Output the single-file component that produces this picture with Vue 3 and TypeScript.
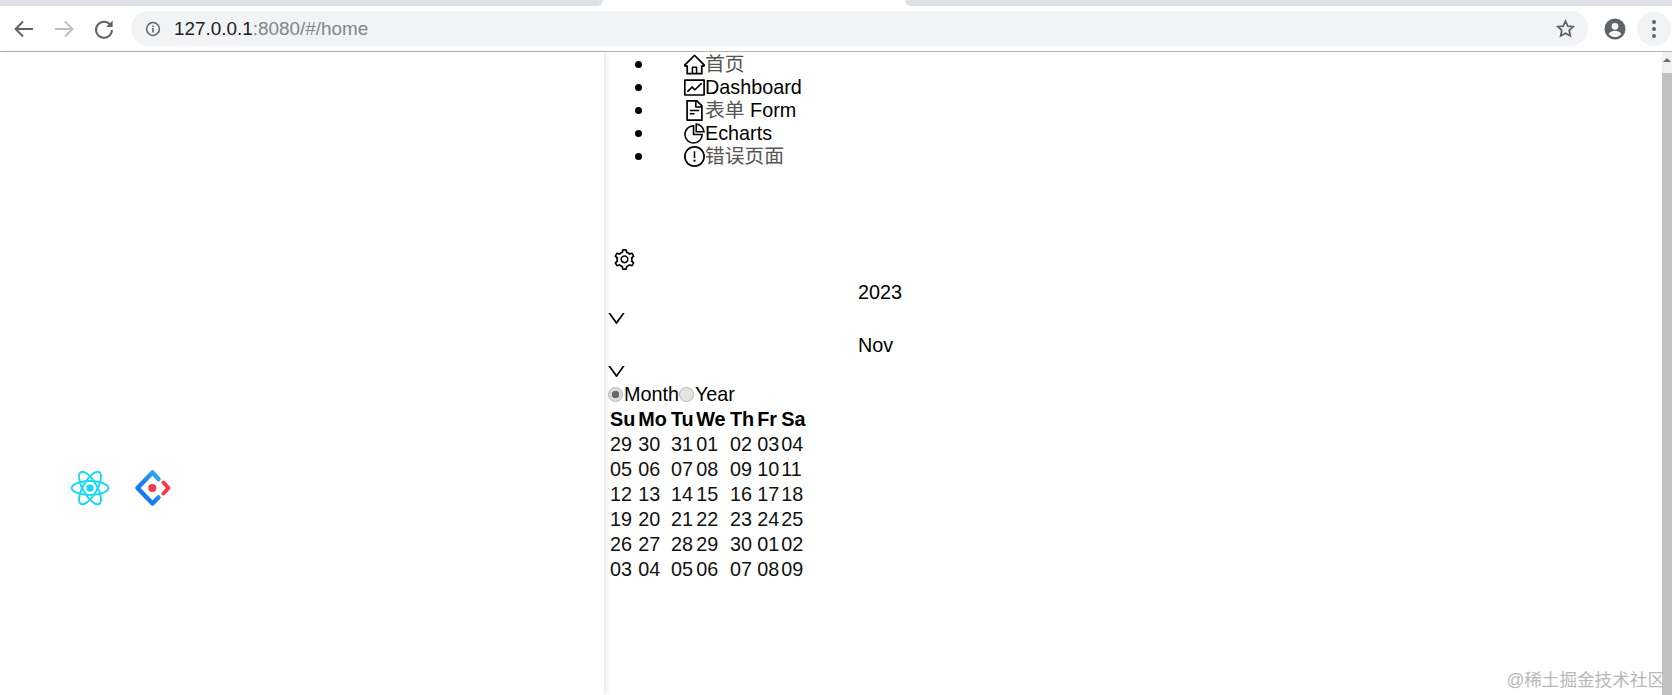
<script setup lang="ts">
const menu = [
  { cjk: '首页', text: '', d: ['M946.5 505L560.1 118.8l-25.9-25.9a31.5 31.5 0 0 0-44.4 0L77.5 505a63.9 63.9 0 0 0-18.8 46c.4 35.2 29.7 63.3 64.9 63.3h42.5V940h691.8V614.3h43.4c17.1 0 33.2-6.7 45.3-18.8a63.6 63.6 0 0 0 18.7-45.3c0-17-6.7-33.1-18.8-45.2zM568 868H456V664h112v204zm217.9-325.7V868H632V640c0-22.1-17.9-40-40-40H432c-22.1 0-40 17.9-40 40v228H238.1V542.3h-96l370-369.7 23.1 23.1L882 542.3h-96.1z'] },
  { cjk: '', text: 'Dashboard', d: ['M926 164H94c-17.7 0-32 14.3-32 32v640c0 17.7 14.3 32 32 32h832c17.7 0 32-14.3 32-32V196c0-17.7-14.3-32-32-32zm-40 632H134V236h752v560zm-658.9-82.3c3.1 3.1 8.2 3.1 11.3 0l172.5-172.5 114.4 114.5c3.1 3.1 8.2 3.1 11.3 0l297-297.2c3.1-3.1 3.1-8.2 0-11.3l-36.8-36.8a8.03 8.03 0 0 0-11.3 0L531 565 416.6 450.5a8.03 8.03 0 0 0-11.3 0l-214.9 215a8.03 8.03 0 0 0 0 11.3l36.7 36.9z'] },
  { cjk: '表单', text: ' Form', d: ['M854.6 288.6L639.4 73.4c-6-6-14.1-9.4-22.6-9.4H192c-17.7 0-32 14.3-32 32v832c0 17.7 14.3 32 32 32h640c17.7 0 32-14.3 32-32V311.3c0-8.5-3.4-16.7-9.4-22.7zM790.2 326H602V137.8L790.2 326zm1.8 562H232V136h302v216a42 42 0 0 0 42 42h216v494zM504 618H320c-4.4 0-8 3.6-8 8v48c0 4.4 3.6 8 8 8h184c4.4 0 8-3.6 8-8v-48c0-4.4-3.6-8-8-8zM312 490v48c0 4.4 3.6 8 8 8h384c4.4 0 8-3.6 8-8v-48c0-4.4-3.6-8-8-8H320c-4.4 0-8 3.6-8 8z'] },
  { cjk: '', text: 'Echarts', d: ['M864 518H506V160c0-4.4-3.6-8-8-8h-26a398.46 398.46 0 0 0-282.8 117.1 398.19 398.19 0 0 0-85.7 127.1A397.61 397.61 0 0 0 72 552a398.46 398.46 0 0 0 117.1 282.8c36.7 36.7 79.5 65.6 127.1 85.7A397.61 397.61 0 0 0 472 952a398.46 398.46 0 0 0 282.8-117.1c36.7-36.7 65.6-79.5 85.7-127.1A397.61 397.61 0 0 0 872 552v-26c0-4.4-3.6-8-8-8zM705.7 787.8A331.59 331.59 0 0 1 470.4 884c-88.1-.4-170.9-34.9-233.2-97.2C174.5 724.1 140 640.7 140 552c0-88.7 34.5-172.1 97.2-234.8 54.6-54.6 124.9-87.9 200.8-95.5V586h364.3c-7.7 76.3-41.3 147-96.6 201.8zM952 462.4l-2.6-28.2c-8.5-92.1-49.4-179-115.2-244.6A399.4 399.4 0 0 0 589 74.6L560.7 72c-4.7-.4-8.7 3.2-8.7 7.9V464c0 4.4 3.6 8 8 8l384-1c4.7 0 8.4-4 8-8.6zm-332.2-58.2V147.6a332.24 332.24 0 0 1 166.4 89.8c45.7 45.6 77 103.6 90 166.1l-256.4.7z'] },
  { cjk: '错误页面', text: '', d: ['M512 64C264.6 64 64 264.6 64 512s200.6 448 448 448 448-200.6 448-448S759.4 64 512 64zm0 820c-205.4 0-372-166.6-372-372s166.6-372 372-372 372 166.6 372 372-166.6 372-372 372z', 'M464 688a48 48 0 1 0 96 0 48 48 0 1 0-96 0zm24-112h48c4.4 0 8-3.6 8-8V296c0-4.4-3.6-8-8-8h-48c-4.4 0-8 3.6-8 8v272c0 4.4 3.6 8 8 8z'] },
]
const gear = 'M924.8 625.7l-65.5-56c3.1-19 4.7-38.4 4.7-57.8s-1.6-38.8-4.7-57.8l65.5-56a32.03 32.03 0 0 0 9.3-35.2l-.9-2.6a443.74 443.74 0 0 0-79.7-137.9l-1.8-2.1a32.12 32.12 0 0 0-35.1-9.5l-81.3 28.9c-30-24.6-63.5-44-99.7-57.6l-15.7-85a32.05 32.05 0 0 0-25.8-25.7l-2.7-.5c-52.1-9.4-106.9-9.4-159 0l-2.7.5a32.05 32.05 0 0 0-25.8 25.7l-15.8 85.4a351.86 351.86 0 0 0-99 57.4l-81.9-29.1a32 32 0 0 0-35.1 9.5l-1.8 2.1a446.02 446.02 0 0 0-79.7 137.9l-.9 2.6c-4.5 12.5-.8 26.5 9.3 35.2l66.3 56.6c-3.1 18.8-4.6 38-4.6 57.1 0 19.2 1.5 38.4 4.6 57.1L99 625.5a32.03 32.03 0 0 0-9.3 35.2l.9 2.6c18.1 50.4 44.9 96.9 79.7 137.9l1.8 2.1a32.12 32.12 0 0 0 35.1 9.5l81.9-29.1c29.8 24.5 63.1 43.9 99 57.4l15.8 85.4a32.05 32.05 0 0 0 25.8 25.7l2.7.5a449.4 449.4 0 0 0 159 0l2.7-.5a32.05 32.05 0 0 0 25.8-25.7l15.7-85a350 350 0 0 0 99.7-57.6l81.3 28.9a32 32 0 0 0 35.1-9.5l1.8-2.1c34.8-41.1 61.6-87.5 79.7-137.9l.9-2.6c4.5-12.3.8-26.3-9.3-35zM788.3 465.9c2.5 15.1 3.8 30.6 3.8 46.1s-1.3 31-3.8 46.1l-6.6 40.1 74.7 63.9a370.03 370.03 0 0 1-42.6 73.6L721 702.8l-31.4 25.8c-23.9 19.6-50.5 35-79.3 45.8l-38.1 14.3-17.9 97a377.5 377.5 0 0 1-85 0l-17.9-97.2-37.8-14.5c-28.5-10.8-55-26.2-78.7-45.7l-31.4-25.9-93.4 33.2c-17-22.9-31.2-47.6-42.6-73.6l75.5-64.5-6.5-40c-2.4-14.9-3.7-30.3-3.7-45.5 0-15.3 1.2-30.6 3.7-45.5l6.5-40-75.5-64.5c11.3-26.1 25.6-50.7 42.6-73.6l93.4 33.2 31.4-25.9c23.7-19.5 50.2-34.9 78.7-45.7l37.9-14.3 17.9-97.2c28.1-3.2 56.8-3.2 85 0l17.9 97 38.1 14.3c28.7 10.8 55.4 26.2 79.3 45.8l31.4 25.8 92.8-32.9c17 22.9 31.2 47.6 42.6 73.6L781.8 426l6.5 39.9zM512 326c-97.2 0-176 78.8-176 176s78.8 176 176 176 176-78.8 176-176-78.8-176-176-176zm79.2 255.2A111.6 111.6 0 0 1 512 614c-29.9 0-58-11.7-79.2-32.8A111.6 111.6 0 0 1 400 502c0-29.9 11.7-58 32.8-79.2C454 401.6 482.1 390 512 390c29.9 0 58 11.6 79.2 32.8A111.6 111.6 0 0 1 624 502c0 29.9-11.7 58-32.8 79.2z'
const down = 'M884 256h-75c-5.1 0-9.9 2.5-12.9 6.6L512 654.2 227.9 262.6c-3-4.1-7.8-6.6-12.9-6.6h-75c-6.5 0-10.3 7.4-6.5 12.7l352.6 486.1c12.8 17.6 39 17.6 51.7 0l352.6-486.1c3.9-5.3.1-12.7-6.4-12.7z'
const selects = ['2023', 'Nov']
const heads = ['Su', 'Mo', 'Tu', 'We', 'Th', 'Fr', 'Sa']
const days = [
  ['29', '30', '31', '01', '02', '03', '04'],
  ['05', '06', '07', '08', '09', '10', '11'],
  ['12', '13', '14', '15', '16', '17', '18'],
  ['19', '20', '21', '22', '23', '24', '25'],
  ['26', '27', '28', '29', '30', '01', '02'],
  ['03', '04', '05', '06', '07', '08', '09'],
]
</script>

<template>
  <div class="window">
    <div class="tabs">
      <div class="tab left"></div>
      <div class="tab active"></div>
      <div class="tab right"></div>
    </div>
    <div class="toolbar">
      <svg class="nav" viewBox="0 0 24 24" fill="none" stroke="#5f6368" stroke-width="2"><path d="M21 12H4M11 4.500 3.600 12l7.400 7.500" /></svg>
      <svg class="nav" viewBox="0 0 24 24" fill="none" stroke="#bcbfc4" stroke-width="2"><path d="M3 12h17M13 4.500l7.400 7.500-7.400 7.500" /></svg>
      <svg class="nav" viewBox="0 0 24 24" fill="none" stroke="#5f6368" stroke-width="2"><path d="M18.600 8.200A8 8 0 1 0 20 13" /><path d="M20.600 3.500v6.600H14z" fill="#5f6368" stroke="none" /></svg>
      <div class="omnibox">
        <svg class="info" viewBox="0 0 16 16"><circle cx="8" cy="8" r="6.400" fill="none" stroke="#5f6368" stroke-width="1.500" /><path d="M7.200 7h1.600v4.600H7.200zM7.200 4.400h1.600V6H7.200z" fill="#5f6368" /></svg>
        <span class="url"><span class="host">127.0.0.1</span>:8080/#/home</span>
        <svg class="star" viewBox="0 0 24 24" fill="none" stroke="#5f6368" stroke-width="2"><path d="M12 3.600l2.600 5.700 6.200.7-4.600 4.200 1.300 6.100L12 17.300l-5.500 3 1.300-6.100L3.200 10l6.200-.7z" /></svg>
      </div>
      <svg class="avatar" viewBox="0 0 24 24"><circle cx="12" cy="12" r="10.500" fill="#5f6368" /><circle cx="12" cy="9.300" r="3.400" fill="#f1f3f4" /><path d="M5.600 17c1.500-2.400 4-3.300 6.400-3.300s4.900.9 6.400 3.300a8.200 8.200 0 0 1-12.800 0z" fill="#f1f3f4" /></svg>
      <div class="kebab"><i></i><i></i><i></i></div>
    </div>

    <div class="page">
      <aside class="side-panel">
        <div class="logos">
          <svg class="react" viewBox="-12 -12 24 24" fill="none" stroke="#18d8f5" stroke-width="1.150">
            <circle r="2.200" fill="#18d8f5" stroke="none" />
            <ellipse rx="11" ry="4.200" />
            <ellipse rx="11" ry="4.200" transform="rotate(60)" />
            <ellipse rx="11" ry="4.200" transform="rotate(120)" />
          </svg>
          <svg class="ant" viewBox="0 0 40 40" fill="none" stroke-linecap="round" stroke-linejoin="round">
            <defs>
              <linearGradient id="antBlue" x1="1" y1="0" x2="0" y2="1">
                <stop offset="0" stop-color="#2fb0f5" />
                <stop offset="0.5" stop-color="#1a80f2" />
                <stop offset="1" stop-color="#1a74ee" />
              </linearGradient>
            </defs>
            <path d="M26.500 11 20.500 4.500 5.500 20 20.500 35.500 26.500 29.500" stroke="url(#antBlue)" stroke-width="4.500" />
            <circle cx="20.300" cy="20" r="4" fill="#f5384f" />
            <path d="M31.500 14.500 36.500 20 31.500 25.500" stroke="#f5384f" stroke-width="4" />
          </svg>
        </div>
      </aside>

      <main class="content">
        <ul class="menu">
          <li v-for="item in menu" :key="item.cjk + item.text">
            <svg class="menu-icon" viewBox="64 64 896 896"><path v-for="p in item.d" :key="p" :d="p" /></svg>
            <span class="label"><span v-if="item.cjk" class="cjk">{{ item.cjk }}</span>{{ item.text }}</span>
          </li>
        </ul>
        <div class="settings">
          <svg viewBox="64 64 896 896"><path :d="gear" /></svg>
        </div>
        <div v-for="s in selects" :key="s" class="select">
          <div class="select-value">{{ s }}</div>
          <svg class="chevron" viewBox="64 64 896 896"><path :d="down" /></svg>
        </div>
        <div class="radios">
          <label class="radio"><input type="radio" name="mode" checked /><span>Month</span></label>
          <label class="radio"><input type="radio" name="mode" /><span>Year</span></label>
        </div>
        <div class="calendar">
          <b v-for="h in heads" :key="h">{{ h }}</b>
          <template v-for="(row, r) in days" :key="r">
            <span v-for="(d, c) in row" :key="c">{{ d }}</span>
          </template>
        </div>
      </main>

      <div class="scrollbar">
        <div class="arrow"></div>
        <div class="thumb"></div>
      </div>
      <div class="watermark">@稀土掘金技术社区</div>
    </div>
  </div>
</template>

<style>
html, body { margin: 0; overflow: hidden; background: #fff; }
</style>

<style scoped>
.window {
  width: 1672px;
  height: 695px;
  display: flex;
  flex-direction: column;
  overflow: hidden;
  font-family: "Liberation Sans", "Noto Sans CJK SC", sans-serif;
  color: #000;
}
.tabs { height: 6px; display: flex; flex: none; }
.tab { background: #dee1e6; }
.tab.left { width: 603px; border-radius: 0 0 7px 0; }
.tab.active { width: 302px; background: #fff; }
.tab.right { flex: 1; border-radius: 0 0 0 7px; }
.toolbar {
  height: 45px;
  flex: none;
  border-bottom: 1px solid #b4b4b4;
  display: flex;
  align-items: center;
  padding-left: 12px;
  background: #fff;
}
.nav { width: 24px; height: 24px; margin-right: 16px; flex: none; }
.omnibox {
  width: 1457px;
  height: 35px;
  margin-left: -1px;
  border-radius: 18px;
  background: #f1f3f4;
  display: flex;
  align-items: center;
  padding: 0 12px 0 14px;
  box-sizing: border-box;
  flex: none;
}
.info { width: 16px; height: 16px; flex: none; }
.url {
  margin-left: 13px;
  font-size: 18.9px;
  color: #80868b;
  flex: 1;
}
.host { color: #202124; }
.star { width: 21px; height: 21px; flex: none; }
.avatar { width: 24px; height: 24px; margin-left: 14.5px; flex: none; }
.kebab {
  width: 34px;
  height: 34px;
  border-radius: 50%;
  background: #f1f3f4;
  margin-left: 10.5px;
  display: flex;
  flex-direction: column;
  align-items: center;
  justify-content: center;
  gap: 3px;
  flex: none;
}
.kebab i { width: 4px; height: 4px; border-radius: 50%; background: #5f6368; }

.page {
  flex: 1;
  min-height: 0;
  display: flex;
  position: relative;
  background: #fff;
}
.side-panel {
  width: 604px;
  flex: none;
  box-shadow: 2px 0 5px rgba(0, 0, 0, 0.1);
  display: flex;
  align-items: flex-start;
  z-index: 1;
}
.logos {
  display: flex;
  align-items: center;
  gap: 22px;
  padding: 416px 0 0 70px;
}
.react { width: 40px; height: 40px; flex: none; }
.ant { width: 40px; height: 40px; flex: none; }

.content {
  flex: 1;
  min-width: 0;
  padding-left: 2px;
  font-size: 19.8px;
  line-height: 23px;
}
.menu { margin: 0; padding: 1px 0 0 28.5px; list-style: none; }
.menu li { display: flex; align-items: center; height: 23px; }
.menu li::before {
  content: "";
  width: 7px;
  height: 7px;
  border-radius: 50%;
  background: #000;
  margin-right: 42.5px;
  flex: none;
}
.menu-icon { width: 21px; height: 21px; flex: none; }
.label { white-space: pre; }
.cjk { color: #555; }
.settings { margin-top: 80px; padding-left: 8px; height: 23px; display: flex; align-items: center; }
.settings svg { width: 21px; height: 21px; display: block; }
.select { height: 53px; padding-top: 4px; box-sizing: border-box; }
.settings + .select { margin-top: 6px; }
.select-value { padding-left: 252px; height: 28px; line-height: 23px; }
.chevron { width: 19px; height: 19px; margin-left: 0.5px; display: block; }
.radios { display: flex; height: 23px; align-items: center; }
.radio { display: flex; align-items: center; }
.radio input {
  appearance: none;
  width: 15px;
  height: 15px;
  margin: 0 1px 0 2px;
  border: 1px solid #b5b5b5;
  border-radius: 50%;
  background: #e4e4e4;
  box-sizing: border-box;
}
.radio + .radio input { margin-left: 0; }
.radio input:checked { background: radial-gradient(circle, #666 0 3.5px, #dcdcdc 4px); }
.calendar {
  margin: 1px 0 0 4px;
  display: grid;
  grid-template-columns: 28.3px 32.7px 25.3px 33.7px 27.3px 24px 26px;
  grid-auto-rows: 25px;
  align-items: center;
  color: #111;
}
.calendar b { color: #000; }

.scrollbar {
  width: 10px;
  flex: none;
  background: #f1f1f1;
  display: flex;
  flex-direction: column;
}
.arrow { height: 21px; display: flex; }
.arrow::before {
  content: "";
  margin: 6px auto 0;
  width: 0;
  height: 0;
  border: 4px solid transparent;
  border-top: 0;
  border-bottom: 4px solid #6a6a6a;
}
.thumb { flex: 1; background: #c1c1c1; }
.watermark {
  position: absolute;
  right: 7px;
  top: 616px;
  font-size: 17.6px;
  line-height: 24px;
  color: #b8b8b8;
  white-space: nowrap;
}
</style>
